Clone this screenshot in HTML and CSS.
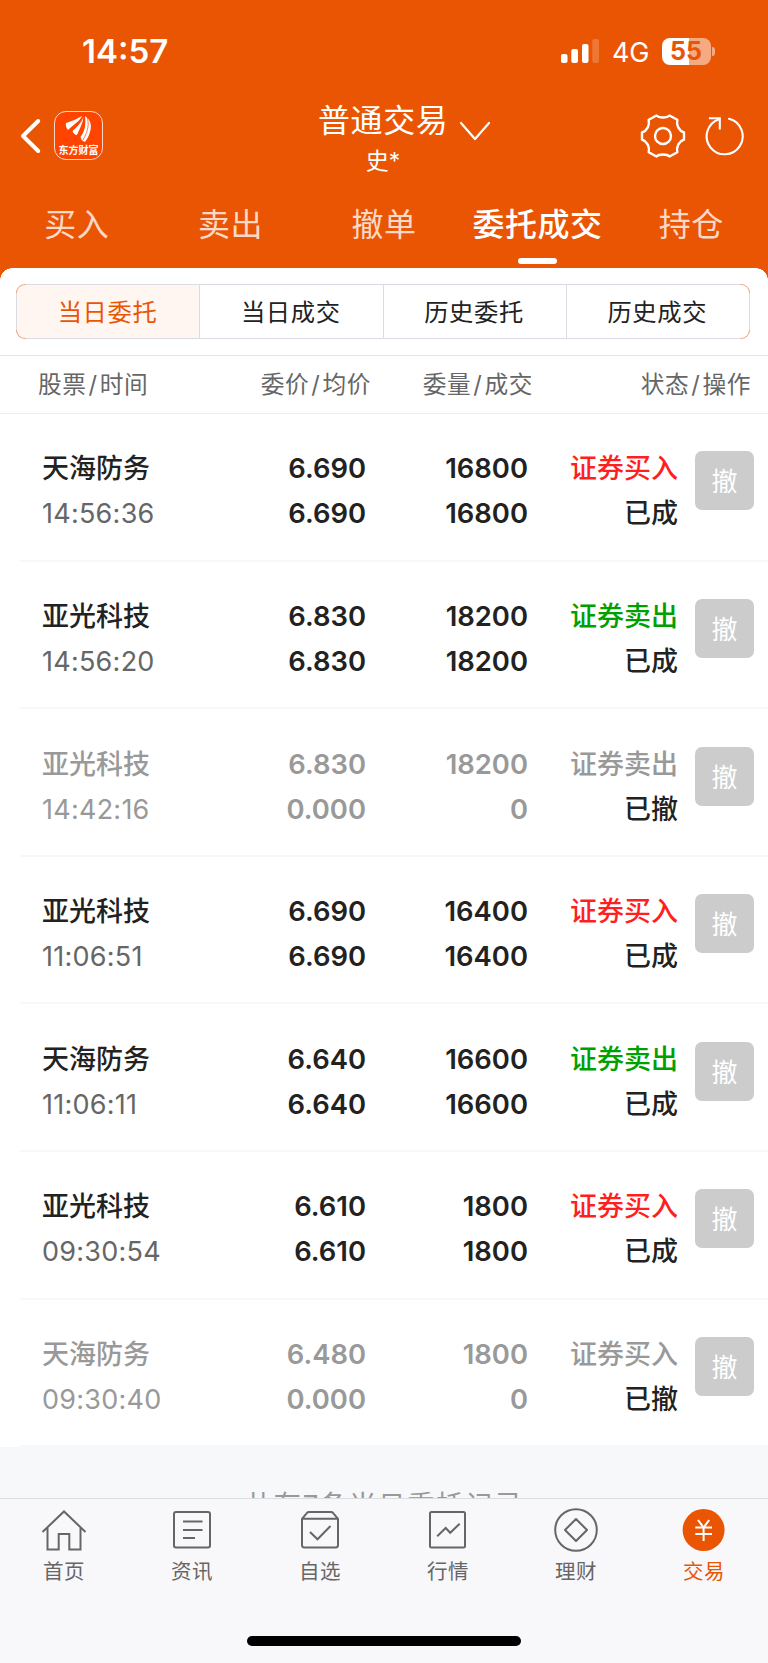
FILE: index.html
```html
<!DOCTYPE html>
<html lang="zh-CN">
<head>
    <meta charset="UTF-8">
    <meta name="viewport" content="width=device-width, initial-scale=1.0">
    <title>普通交易</title>
    <link rel="stylesheet" href="styles.css">
</head>
<body>
    <header class="header">
        <div class="status">
            <span class="clock">14:57</span>
            <svg class="signal" width="39" height="26" viewBox="0 0 39 26" fill="#fff">
                <rect x="0" y="16" width="6.5" height="9" rx="2"/>
                <rect x="10.3" y="11" width="6.7" height="14" rx="2"/>
                <rect x="21" y="6" width="6.5" height="19" rx="2"/>
                <rect x="31.3" y="1" width="6.7" height="24" rx="2" opacity="0.2"/>
            </svg>
            <span class="network">4G</span>
            <div class="battery">55</div>
            <div class="battery-cap"></div>
        </div>

        <div class="nav">
            <svg class="back" width="22" height="36" viewBox="0 0 22 36" fill="none" stroke="#fff" stroke-width="4" stroke-linecap="round" stroke-linejoin="round">
                <path d="M18.2 3 L3 18 L18.2 33"/>
            </svg>
            <div class="logo">
                <svg width="27" height="28" viewBox="0 0 27 28" fill="#fff">
                    <path d="M1 8 C7 6 12 4 17 1 C14 7 9 9 3 15 C1 13 0.5 10 1 8Z"/>
                    <path d="M18.5 1 C18 8 15 13 12 20 C10 20 8 18 7.5 16 C12 12 16 8 18.5 1Z"/>
                    <path d="M20 1 C26 5 27 11 25 17 C24 21 22 24 20 27 C17 26 16 24 15.5 22 C20 16 21 10 20 1Z"/>
                    <path d="M18.5 1 C17 6 13 11 7 15.5 M19.5 1 C20 9 17 15 13.5 21 M22 2 C24.5 9 23 16 18 25" fill="none" stroke="#ff4400" stroke-width="0.7"/>
                </svg>
                <span>东方财富</span>
            </div>
            <div class="title">
                <div class="title-name">普通交易</div>
                <div class="title-user">史*</div>
            </div>
            <svg class="chevron" width="32" height="22" viewBox="0 0 32 22" fill="none" stroke="#fff" stroke-width="2.2" stroke-linecap="round" stroke-linejoin="round">
                <path d="M2 3 L16 19 L30 3"/>
            </svg>
            <svg class="gear" width="46" height="46" viewBox="0 0 46 46" fill="none" stroke="#fff" stroke-width="2.4" stroke-linejoin="round">
                <path d="M16.5 2.5 C19 5.2 27 5.2 29.5 2.5 L37.3 6.8 C36.3 12 38.5 17.5 44 19.5 V26.5 C38.5 28.5 36.3 34 37.3 39.2 L29.5 43.5 C27 40.8 19 40.8 16.5 43.5 L8.7 39.2 C9.7 34 7.5 28.5 2 26.5 V19.5 C7.5 17.5 9.7 12 8.7 6.8 Z"/>
                <circle cx="23" cy="23" r="8"/>
            </svg>
            <svg class="refresh" width="42" height="42" viewBox="0 0 42 42" fill="none" stroke="#fff" stroke-width="2.1" stroke-linecap="round">
                <path d="M25 3.8 A18 18 0 1 1 15 4.2"/>
                <path d="M6 3.2 H15.8 V13.5" stroke-linecap="square"/>
            </svg>
        </div>

        <nav class="tabs">
            <a class="tab">买入</a>
            <a class="tab">卖出</a>
            <a class="tab">撤单</a>
            <a class="tab active">委托成交</a>
            <a class="tab">持仓</a>
        </nav>
    </header>

    <main class="panel">
        <div class="segments">
            <div class="segment active">当日委托</div>
            <div class="segment">当日成交</div>
            <div class="segment">历史委托</div>
            <div class="segment">历史成交</div>
        </div>

        <div class="columns">
            <span>股票<i>/</i>时间</span>
            <span>委价<i>/</i>均价</span>
            <span>委量<i>/</i>成交</span>
            <span>状态<i>/</i>操作</span>
        </div>

        <div class="orders">
            <div class="order">
                <div class="stock">天海防务<br><span class="time">14:56:36</span></div>
                <div class="num">6.690<br>6.690</div>
                <div class="num">16800<br>16800</div>
                <div class="state"><span class="buy">证券买入</span><br>已成</div>
                <button>撤</button>
            </div>
            <div class="order">
                <div class="stock">亚光科技<br><span class="time">14:56:20</span></div>
                <div class="num">6.830<br>6.830</div>
                <div class="num">18200<br>18200</div>
                <div class="state"><span class="sell">证券卖出</span><br>已成</div>
                <button>撤</button>
            </div>
            <div class="order cancelled">
                <div class="stock">亚光科技<br><span class="time">14:42:16</span></div>
                <div class="num">6.830<br>0.000</div>
                <div class="num">18200<br>0</div>
                <div class="state"><span class="sell">证券卖出</span><br>已撤</div>
                <button>撤</button>
            </div>
            <div class="order">
                <div class="stock">亚光科技<br><span class="time">11:06:51</span></div>
                <div class="num">6.690<br>6.690</div>
                <div class="num">16400<br>16400</div>
                <div class="state"><span class="buy">证券买入</span><br>已成</div>
                <button>撤</button>
            </div>
            <div class="order">
                <div class="stock">天海防务<br><span class="time">11:06:11</span></div>
                <div class="num">6.640<br>6.640</div>
                <div class="num">16600<br>16600</div>
                <div class="state"><span class="sell">证券卖出</span><br>已成</div>
                <button>撤</button>
            </div>
            <div class="order">
                <div class="stock">亚光科技<br><span class="time">09:30:54</span></div>
                <div class="num">6.610<br>6.610</div>
                <div class="num">1800<br>1800</div>
                <div class="state"><span class="buy">证券买入</span><br>已成</div>
                <button>撤</button>
            </div>
            <div class="order cancelled">
                <div class="stock">天海防务<br><span class="time">09:30:40</span></div>
                <div class="num">6.480<br>0.000</div>
                <div class="num">1800<br>0</div>
                <div class="state"><span class="buy">证券买入</span><br>已撤</div>
                <button>撤</button>
            </div>
        </div>
    </main>

    <div class="summary">共有7条当日委托记录</div>

    <footer class="tabbar">
        <div class="items">
            <div class="item">
                <svg width="46" height="46" viewBox="0 0 46 46">
                    <path d="M1.5 25 L23 4.5 L44.5 25 M6.5 21 V42.5 H17.7 V27 H28.3 V42.5 H39.5 V21"/>
                </svg>
                首页
            </div>
            <div class="item">
                <svg width="46" height="46" viewBox="0 0 46 46">
                    <rect x="5" y="5" width="36" height="35.5" rx="2"/>
                    <path d="M14 14.5 H33.5 M14 23 H33.5 M14 31 H26"/>
                </svg>
                资讯
            </div>
            <div class="item">
                <svg width="46" height="46" viewBox="0 0 46 46">
                    <path d="M5 11.8 L10 5.8 Q10.7 5 12 5 H34 Q35.3 5 36 5.8 L41 11.8 V38 Q41 40.5 38.5 40.5 H7.5 Q5 40.5 5 38 Z M5 11.8 H41"/>
                    <path d="M13 25 L20.5 32.3 L33.5 19"/>
                </svg>
                自选
            </div>
            <div class="item">
                <svg width="46" height="46" viewBox="0 0 46 46">
                    <rect x="5" y="5" width="35" height="35.5" rx="1.5"/>
                    <path d="M12.2 29.3 L20.7 21 L25.2 25.8 L34.7 16.7"/>
                </svg>
                行情
            </div>
            <div class="item">
                <svg width="46" height="46" viewBox="0 0 46 46">
                    <circle cx="23" cy="23" r="20.8"/>
                    <path d="M23 12 L34 23 L23 34 L12 23 Z" stroke-linejoin="round"/>
                </svg>
                理财
            </div>
            <div class="item active">
                <svg width="46" height="46" viewBox="0 0 46 46">
                    <circle class="coin" cx="22.6" cy="23" r="21"/>
                    <path class="yen" d="M17 13 L22.6 20.5 L28.2 13 M14.3 20.5 H31 M14.3 27 H31 M22.6 20.5 V34"/>
                </svg>
                交易
            </div>
        </div>
        <div class="home-indicator"></div>
    </footer>
</body>
</html>
```

FILE: styles.css
```css
* {
    box-sizing: border-box;
}

body {
    margin: 0;
    width: 768px;
    height: 1663px;
    overflow: hidden;
    display: flex;
    flex-direction: column;
    font-family: Inter, "Noto Sans CJK SC", sans-serif;
    background-color: #f7f8fa;
    color: #222;
}

svg {
    display: block;
    flex: none;
}

.header {
    height: 268px;
    flex: none;
    background-color: #ea5504;
    color: #fff;
}

.status {
    height: 102px;
    display: flex;
    align-items: center;
    padding: 0 53px 0 82px;
}

.clock {
    font-size: 33px;
    font-weight: 600;
    margin-right: auto;
}

.network {
    font-size: 27px;
    font-weight: 400;
    margin: 3px 12px 0 12px;
}

.battery {
    width: 49px;
    height: 27px;
    border-radius: 8px;
    background: linear-gradient(to right, #fff 55%, #f5aa82 55%);
    color: #ea5504;
    font-size: 25px;
    font-weight: 700;
    line-height: 27px;
    text-align: center;
}

.battery-cap {
    width: 3px;
    height: 9px;
    margin-left: 1.5px;
    border-radius: 0 4px 4px 0;
    background-color: #f5aa82;
}

.nav {
    height: 68px;
    display: flex;
    align-items: center;
    padding-left: 20px;
}

.logo {
    width: 49px;
    height: 49px;
    margin: -2px 0 0 12px;
    border: 1px solid #ffd9c8;
    border-radius: 12px;
    background-color: #ff4400;
    display: flex;
    flex-direction: column;
    align-items: center;
    padding-top: 3px;
}

.logo span {
    font-family: "Noto Sans CJK SC", sans-serif;
    font-size: 10px;
    font-weight: 700;
    line-height: 14px;
    white-space: nowrap;
}

.title {
    width: 130px;
    margin: 5px 0 0 215px;
    text-align: center;
}

.title-name {
    font-size: 32px;
    line-height: 40px;
    letter-spacing: 0.6px;
    white-space: nowrap;
}

.title-user {
    font-size: 23px;
    line-height: 32px;
    margin-top: 4px;
}

.chevron {
    margin: -10px 0 0 11px;
}

.gear {
    margin-left: 148.5px;
}

.refresh {
    margin-left: 18px;
}

.tabs {
    display: flex;
    height: 98px;
}

.tab {
    flex: 1;
    display: flex;
    flex-direction: column;
    align-items: center;
    padding-top: 31px;
    font-size: 32px;
    line-height: 48px;
    letter-spacing: 0.5px;
    white-space: nowrap;
    color: #fbd9c7;
}

.tab.active {
    font-weight: 500;
    color: #fff;
}

.tab.active::after {
    content: "";
    width: 39px;
    height: 6px;
    margin-top: 9px;
    border-radius: 3px;
    background-color: #fff;
}

.panel {
    flex: none;
    background: #fff;
    position: relative;
}

/* rounded corners over the orange header */
.panel::before {
    content: "";
    position: absolute;
    top: 0;
    left: 0;
    right: 0;
    height: 12px;
    background: radial-gradient(circle at 12px 12px, transparent 11.5px, #ea5504 12px) left / 12px 12px no-repeat,
        radial-gradient(circle at 0 12px, transparent 11.5px, #ea5504 12px) right / 12px 12px no-repeat;
}

/* grey edges, orange at the corners */
.segments {
    display: flex;
    height: 55px;
    margin: 0 18px 0 16px;
    position: relative;
    top: 16px;
    padding: 1px;
    border-radius: 9px;
    background: linear-gradient(to right, #f0a078 9px, #d9dce3 10px, #d9dce3 calc(100% - 10px), #f0a078 calc(100% - 9px));
    overflow: hidden;
}

.segments::after {
    content: "";
    position: absolute;
    inset: 9px 0;
    border-left: 1px solid #d9dce3;
    border-right: 1px solid #d9dce3;
}

.segment {
    flex: 1;
    border-left: 1px solid #d9dce3;
    background-color: #fff;
    font-size: 24.3px;
    line-height: 54px;
    letter-spacing: 0.7px;
    text-align: center;
    padding-right: 1px;
}

.segment.active {
    border-left: none;
    border-radius: 8px 0 0 8px;
    background-color: #fff5f1;
    color: #ea5504;
}

.segment:last-child {
    border-radius: 0 8px 8px 0;
}

.columns {
    display: grid;
    grid-template-columns: 171px 162px 162px 218px;
    height: 59px;
    margin-top: 32px;
    padding-left: 38px;
    border-top: 1px solid #e4e5e8;
    border-bottom: 1px solid #ebecef;
    font-size: 23.7px;
    line-height: 58px;
    letter-spacing: 0.6px;
    color: #666;
    text-align: right;
}

.columns span:first-child {
    text-align: left;
}

.columns i {
    font-style: normal;
    margin: 0 2px;
}

.order {
    display: grid;
    grid-template-columns: 164px 160px 162px 150px 59px;
    height: 147.6px;
    padding: 32.4px 0 0 42px;
    font-size: 27px;
    font-weight: 500;
    line-height: 45px;
    background: linear-gradient(#f7f8f9, #f7f8f9) 20px 100% / 100% 2px no-repeat;
}

.num {
    font-size: 27.4px;
    font-weight: 600;
}

.num, .state {
    text-align: right;
}

.time {
    font-weight: 400;
    letter-spacing: 0.25px;
    color: #666;
}

.buy {
    color: #ff1f1f;
}

.sell {
    color: #00a000;
}

.cancelled .stock,
.cancelled .time,
.cancelled .num,
.cancelled .buy,
.cancelled .sell {
    color: #999;
}

.order button {
    width: 59px;
    height: 59px;
    margin: 5px 0 0 17px;
    padding: 0 0 2px;
    border: none;
    border-radius: 7px;
    background-color: #ccc;
    color: #fff;
    font-family: inherit;
    font-size: 26px;
}

.summary {
    flex: none;
    height: 51px;
    padding-top: 38px;
    overflow: hidden;
    font-size: 27.5px;
    line-height: 40px;
    letter-spacing: 1.6px;
    text-align: center;
    color: #999;
}

.tabbar {
    flex: 1;
    border-top: 1px solid #dcdde0;
    background-color: #f8f8fb;
}

.items {
    display: flex;
    height: 137px;
    padding-top: 8px;
}

.item {
    flex: 1;
    display: flex;
    flex-direction: column;
    align-items: center;
    font-size: 20.5px;
    line-height: 38px;
    letter-spacing: 0.6px;
    color: #666;
}

.item svg {
    fill: none;
    stroke: #666;
    stroke-width: 2;
}

.item.active {
    color: #ea5504;
}

.item .coin {
    fill: #ea5504;
    stroke: none;
}

.item .yen {
    stroke: #fff;
}

.home-indicator {
    width: 274px;
    height: 10px;
    margin: 0 auto;
    border-radius: 5px;
    background-color: #000;
}
```
